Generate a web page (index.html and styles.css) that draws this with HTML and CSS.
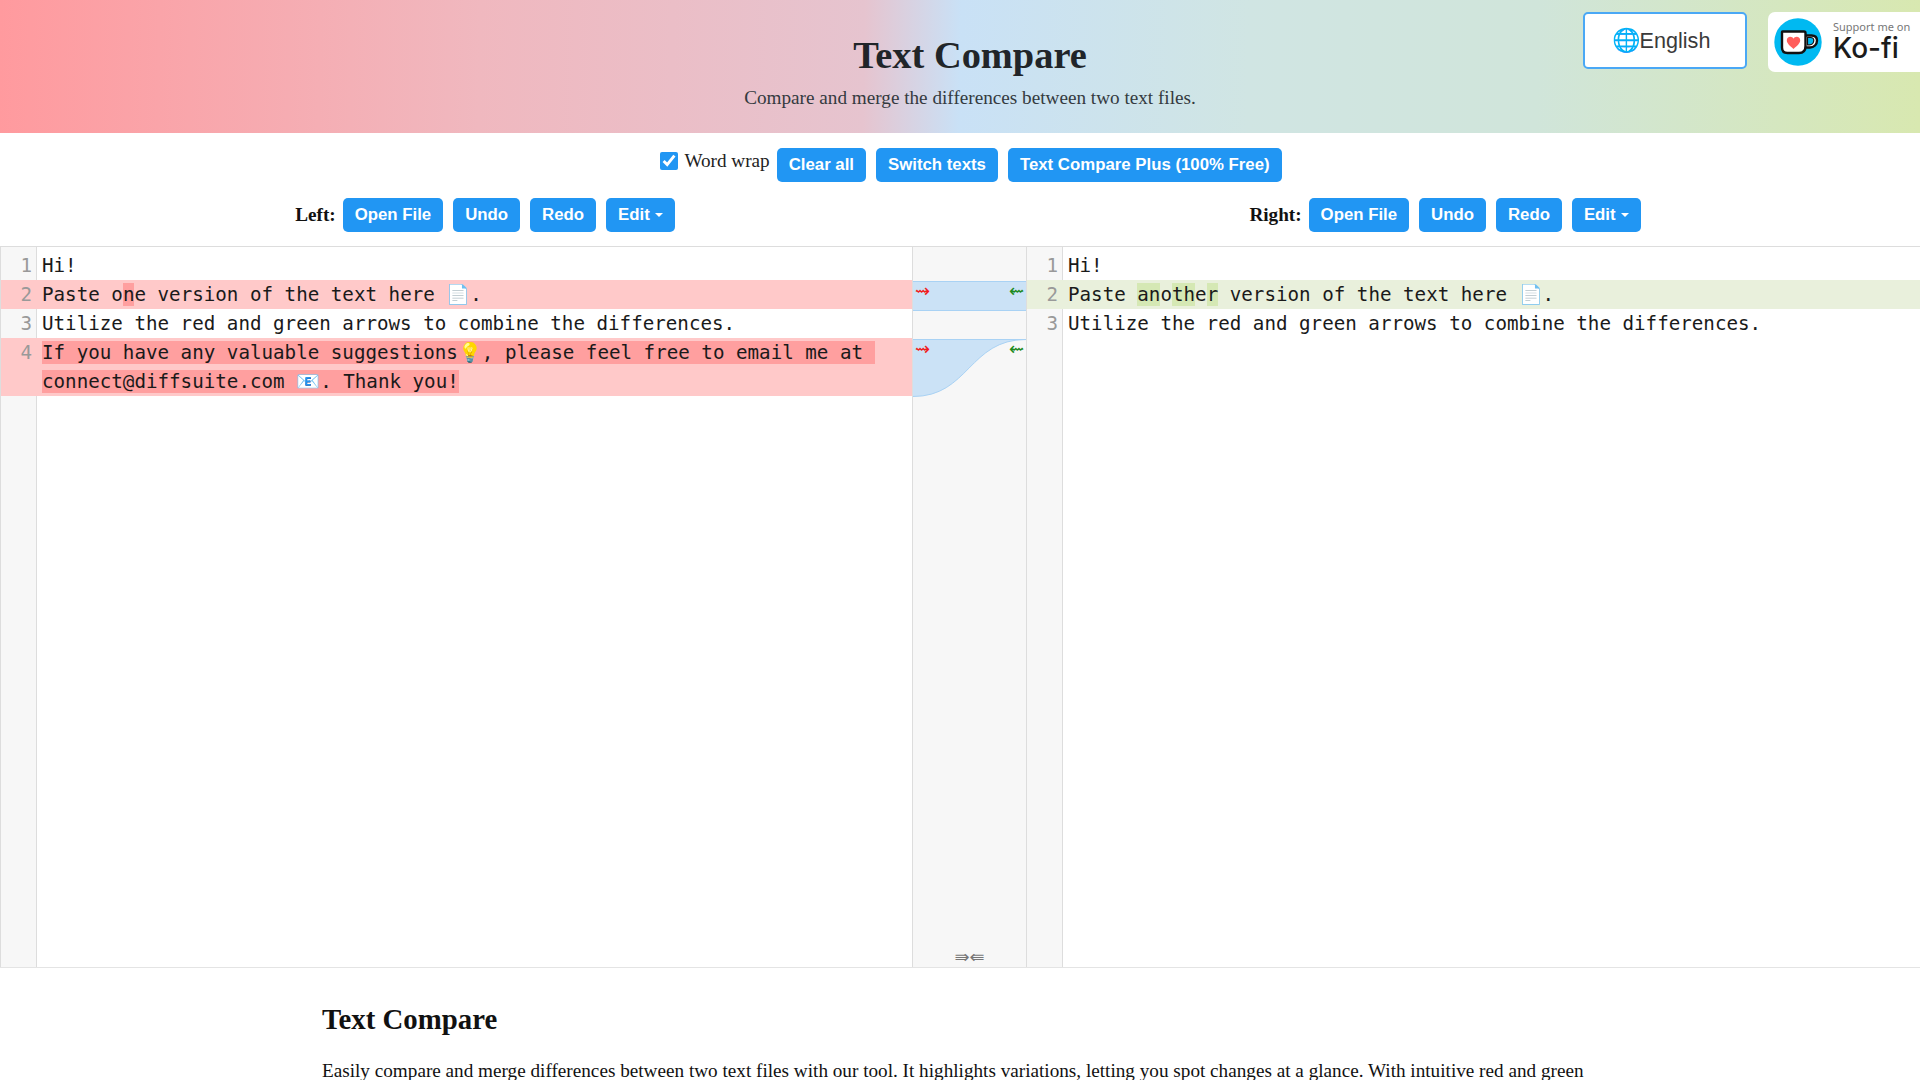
FILE: index.html
```html
<!DOCTYPE html>
<html lang="en">
<head>
<meta charset="utf-8">
<title>Text Compare</title>
<link rel="stylesheet" href="styles.css">
</head>
<body>
<header class="hero">
  <h1 class="hero-title">Text Compare</h1>
  <p class="hero-sub">Compare and merge the differences between two text files.</p>
  <button class="lang"><span class="lang-globe">🌐</span>English</button>
  <a class="kofi">
    <svg class="kofi-mark" viewBox="0 0 48 48" width="48" height="48" aria-hidden="true">
      <circle cx="24" cy="24" r="23.7" fill="#00b9f1"/>
      <path d="M31 17.500H37.500C41 17.500 43 19.500 43 22.500C43 26.500 40 29.500 36 29.500H31" fill="#fff" stroke="#111" stroke-width="2.400"/>
      <path d="M33.500 19.500H36.500C38.500 19.500 39.800 20.700 39.800 22.500C39.800 24.800 38 26.800 35.500 26.800H33.500Z" fill="#00b9f1" stroke="#111" stroke-width="1.200"/>
      <path d="M8.500 13.500H30C31 13.500 31.500 14 31.500 15V28C31.500 32.500 29 35 25 35H13.500C10 35 8 33 8 29.500V14C8 13.700 8.200 13.500 8.500 13.500Z" fill="#fff" stroke="#111" stroke-width="2.400" stroke-linejoin="round"/>
      <path d="M19.500 31C16 28 12.800 25.500 12.800 22.300C12.800 20.200 14.400 18.800 16.300 18.800C17.700 18.800 18.800 19.500 19.500 20.700C20.200 19.500 21.300 18.800 22.700 18.800C24.600 18.800 26.200 20.200 26.200 22.300C26.200 25.500 23 28 19.500 31Z" fill="#ff5e5b"/>
    </svg>
    <span class="kofi-text">
      <span class="kofi-small">Support me on</span>
      <span class="kofi-big">Ko-fi</span>
    </span>
  </a>
</header>

<div class="actions">
  <label class="wrap-label"><input class="wrap-check" type="checkbox" checked>Word wrap</label>
  <button class="btn">Clear all</button>
  <button class="btn">Switch texts</button>
  <button class="btn">Text Compare Plus (100% Free)</button>
</div>

<div class="side-tools">
  <div class="side-tool">
    <strong class="side-label">Left:</strong>
    <button class="btn">Open File</button>
    <button class="btn">Undo</button>
    <button class="btn">Redo</button>
    <button class="btn">Edit<span class="caret"></span></button>
  </div>
  <div class="side-tool">
    <strong class="side-label">Right:</strong>
    <button class="btn">Open File</button>
    <button class="btn">Undo</button>
    <button class="btn">Redo</button>
    <button class="btn">Edit<span class="caret"></span></button>
  </div>
</div>

<main class="editor">
  <section class="pane pane-left">
    <div class="gutter">
      <div class="num">1</div>
      <div class="num num-del">2</div>
      <div class="num">3</div>
      <div class="num num-del num-tall">4</div>
    </div>
    <div class="code">
      <div class="line">Hi!</div>
      <div class="line line-del">Paste o<span class="hl-del">n</span>e version of the text here 📄.</div>
      <div class="line">Utilize the red and green arrows to combine the differences.</div>
      <div class="line line-del"><span class="hl-del">If you have any valuable suggestions💡, please feel free to email me at connect@diffsuite.com 📧. Thank you!</span></div>
    </div>
  </section>

  <section class="middle">
    <svg class="links" viewBox="0 0 113 720" width="113" height="720" aria-hidden="true">
      <path d="M0 34.500H113V63.500H0Z" fill="#cbe2f6"/>
      <path d="M0 34.500H113M0 63.500H113" stroke="#a9d2f4" stroke-width="1" fill="none"/>
      <path d="M0 92.500H113C56 92.500 56 149.500 0 149.500Z" fill="#cbe2f6"/>
      <path d="M0 92.500H113M113 92.500C56 92.500 56 149.500 0 149.500" stroke="#a9d2f4" stroke-width="1" fill="none"/>
    </svg>
    <span class="arrow arrow-r arrow-1">⇝</span>
    <span class="arrow arrow-l arrow-1">⇜</span>
    <span class="arrow arrow-r arrow-2">⇝</span>
    <span class="arrow arrow-l arrow-2">⇜</span>
    <span class="collapse">⇛⇚</span>
  </section>

  <section class="pane pane-right">
    <div class="gutter">
      <div class="num">1</div>
      <div class="num num-ins">2</div>
      <div class="num">3</div>
    </div>
    <div class="code">
      <div class="line">Hi!</div>
      <div class="line line-ins">Paste <span class="hl-ins">an</span>o<span class="hl-ins">th</span>e<span class="hl-ins">r</span> version of the text here 📄.</div>
      <div class="line">Utilize the red and green arrows to combine the differences.</div>
    </div>
  </section>
</main>

<article class="about">
  <h2 class="about-title">Text Compare</h2>
  <p class="about-text">Easily compare and merge differences between two text files with our tool. It highlights variations, letting you spot changes at a glance. With intuitive red and green arrows, combining the differences takes only a click.</p>
</article>
</body>
</html>
```

FILE: styles.css
```css
* { box-sizing: border-box; }
html, body { margin: 0; padding: 0; }
body {
  font-family: "Liberation Serif", "Times New Roman", serif;
  color: #111;
  background: #fff;
  font-size: 19.2px;
}

.hero {
  position: relative;
  height: 133px;
  padding: 32px 0 0 20px;
  text-align: center;
  color: #212529;
  background: linear-gradient(91deg, #ff9a9e 0%, #f0b8bf 25%, #e6c4cf 45%, #c9e1f6 50%, #d0e5e3 65%, #d0e5da 80%, #d8e8b0 100%);
}
.hero-title { margin: 0; font-size: 38.4px; line-height: 46px; font-weight: 700; }
.hero-sub { margin: 8px 0 0; font-size: 19.2px; line-height: 23px; color: #343a40; }

.lang {
  position: absolute;
  top: 12px;
  left: 1583px;
  width: 164px;
  height: 57px;
  background: #fff;
  border: 2px solid #4aa8f5;
  border-radius: 5px;
  font-family: "Liberation Sans", Arial, sans-serif;
  font-size: 21.6px;
  color: #3a3a3a;
  padding: 0 2px 0 0;
}
.lang-globe { font-size: 23px; margin: 0 -1px 0 -6px; }

.kofi {
  position: absolute;
  top: 12px;
  left: 1768px;
  width: 152px;
  height: 60px;
  background: #fff;
  border-radius: 7px 0 0 7px;
  display: flex;
  align-items: center;
  gap: 11px;
  padding: 0 6px 0 6px;
}
.kofi-mark { flex: none; }
.kofi-text { display: flex; flex-direction: column; text-align: left; }
.kofi-small { font-family: "Noto Sans", sans-serif; font-size: 11px; line-height: 12px; color: #777; }
.kofi-big { font-family: Inter, sans-serif; font-size: 28px; line-height: 30px; font-weight: 500; color: #1b1b1b; }

.actions {
  display: flex;
  justify-content: center;
  align-items: flex-start;
  gap: 10px;
  padding: 15px 0 0 22px;
  height: 65px;
}
.wrap-label { display: flex; align-items: center; gap: 6px; height: 26px; margin-right: -3px; color: #222; }
.wrap-check { width: 18px; height: 18px; margin: 0; accent-color: #2196f3; }

.side-tools { display: flex; height: 48px; }
.side-tool { flex: 1 1 50%; display: flex; justify-content: center; align-items: flex-start; gap: 10px; padding-left: 10px; }
.side-label { line-height: 34px; margin-right: -3px; }

.btn {
  height: 34px;
  padding: 0 12px;
  border: 0;
  border-radius: 5px;
  background: #2196f3;
  color: #fff;
  font-family: "Liberation Sans", Arial, sans-serif;
  font-size: 16.8px;
  font-weight: 700;
}
.caret {
  display: inline-block;
  margin-left: 5px;
  vertical-align: 3px;
  border-top: 4px solid #fff;
  border-left: 4px solid transparent;
  border-right: 4px solid transparent;
}

.editor {
  display: flex;
  height: 722px;
  border-top: 1px solid #ddd;
  border-bottom: 1px solid #e4e4e4;
  font-family: "DejaVu Sans Mono", monospace;
  font-size: 19.2px;
  line-height: 29px;
}
.pane { display: flex; min-width: 0; }
.pane-left { flex: 0 0 912px; border-left: 1px solid #ddd; }
.pane-right { flex: 1 1 0; }

.gutter {
  flex: 0 0 36px;
  padding-top: 4px;
  background: #f7f7f7;
  border-right: 1px solid #ddd;
  color: #999;
  text-align: right;
}
.num { padding-right: 5px; margin-right: -1px; }
.num-tall { height: 58px; }
.num-del { background: #ffc9c9; }
.num-ins { background: #e9f0dc; }

.code { flex: 1 1 0; min-width: 0; padding-top: 4px; color: #1a1a1a; }
.line { padding: 0 5px; white-space: pre-wrap; overflow-wrap: anywhere; }
.line-del { background: #ffc9c9; }
.line-ins { background: #e9f0dc; }
.hl-del { background: #ff9f9f; }
.hl-ins { background: #d5e8b4; }

.middle {
  position: relative;
  flex: 0 0 115px;
  background: #f7f7f7;
  border-left: 1px solid #ddd;
  border-right: 1px solid #ddd;
  font-family: "DejaVu Sans", sans-serif;
}
.links { position: absolute; left: 0; top: 0; width: 100%; height: 100%; }
.arrow { position: absolute; font-size: 18px; line-height: 20px; }
.arrow-r { left: 2px; color: #f01c1c; }
.arrow-l { right: 2px; color: #1e8a1e; }
.arrow-1 { top: 34px; }
.arrow-2 { top: 92px; }
.collapse { position: absolute; left: 0; right: 0; bottom: 0; text-align: center; font-size: 18px; line-height: 20px; color: #777; }

.about { width: 1276px; margin: 0 auto; padding-top: 35px; }
.about-title { margin: 0; font-size: 28.8px; line-height: 32px; font-weight: 700; }
.about-text { margin: 21px 0 0; font-size: 19.2px; line-height: 29px; }
```
